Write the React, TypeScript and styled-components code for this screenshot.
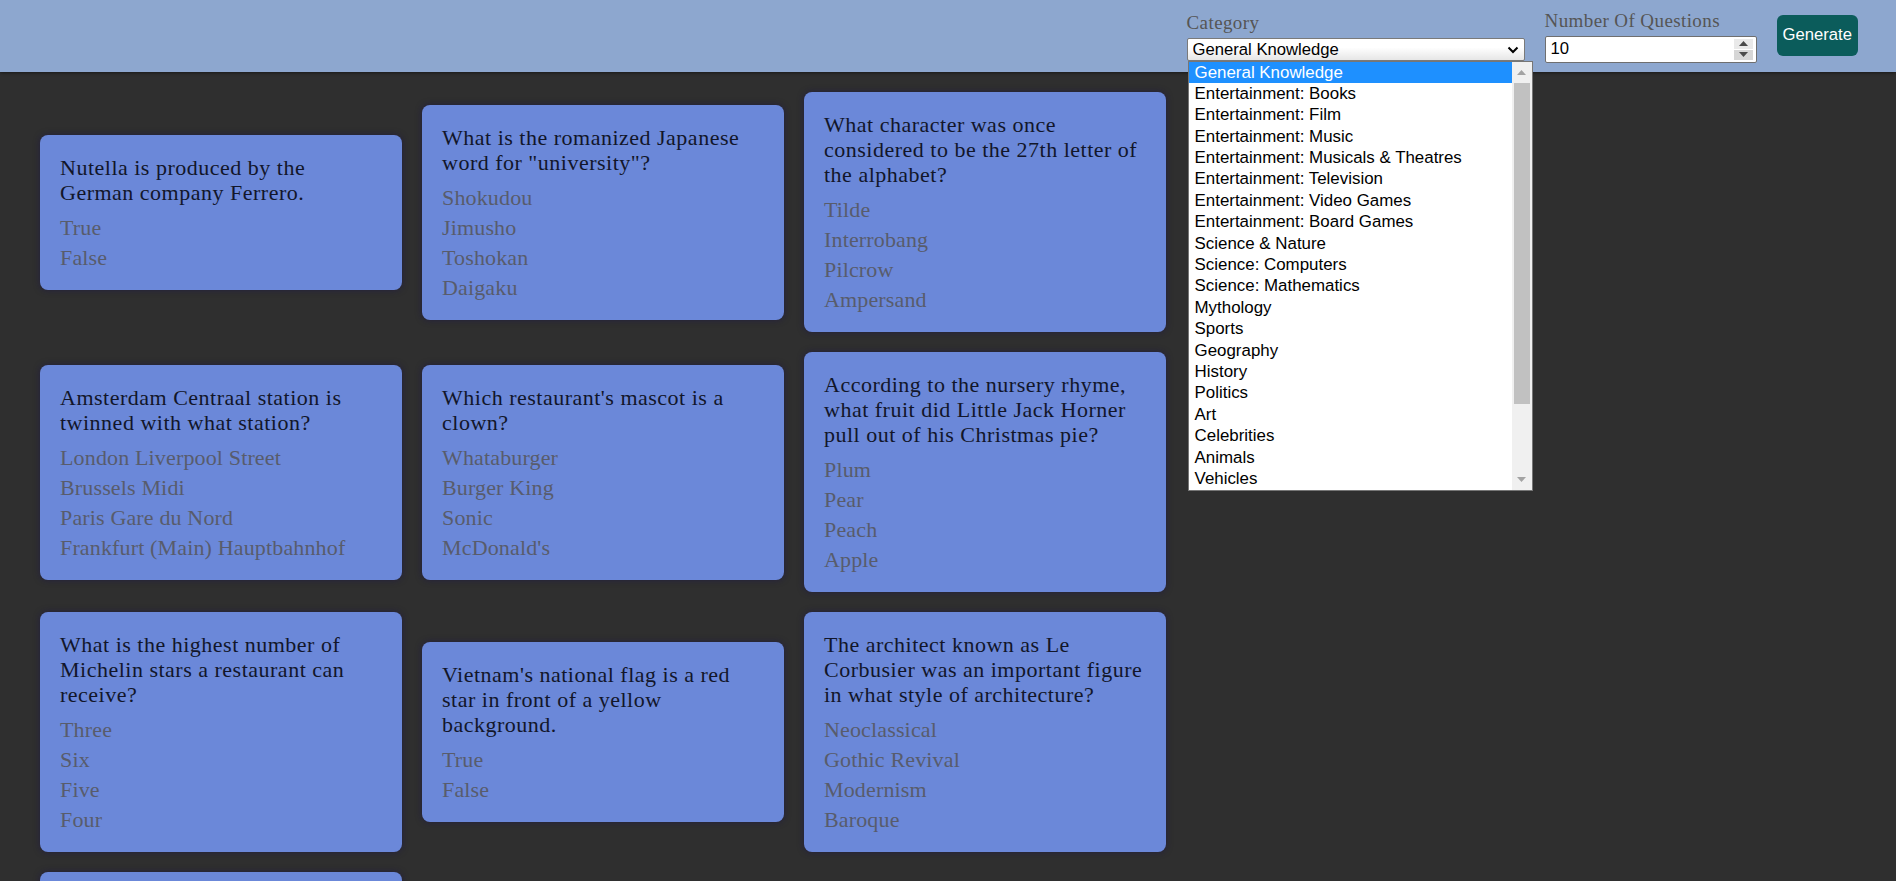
import React from "react";
import styled, { createGlobalStyle, css } from "styled-components";

const GlobalStyle = createGlobalStyle`
  html {
    scrollbar-width: none;
  }
  html::-webkit-scrollbar { display: none; }
  body {
    margin: 0;
    background: #2f2f2f;
    font-family: "Liberation Serif", serif;
  }
  * { box-sizing: border-box; }
`;

type Question = { lines: string[]; answers: string[] };

const questions: Question[] = [
  { lines: ["Nutella is produced by the", "German company Ferrero."], answers: ["True", "False"] },
  {
    lines: ["What is the romanized Japanese", 'word for "university"?'],
    answers: ["Shokudou", "Jimusho", "Toshokan", "Daigaku"],
  },
  {
    lines: ["What character was once", "considered to be the 27th letter of", "the alphabet?"],
    answers: ["Tilde", "Interrobang", "Pilcrow", "Ampersand"],
  },
  {
    lines: ["Amsterdam Centraal station is", "twinned with what station?"],
    answers: ["London Liverpool Street", "Brussels Midi", "Paris Gare du Nord", "Frankfurt (Main) Hauptbahnhof"],
  },
  {
    lines: ["Which restaurant's mascot is a", "clown?"],
    answers: ["Whataburger", "Burger King", "Sonic", "McDonald's"],
  },
  {
    lines: ["According to the nursery rhyme,", "what fruit did Little Jack Horner", "pull out of his Christmas pie?"],
    answers: ["Plum", "Pear", "Peach", "Apple"],
  },
  {
    lines: ["What is the highest number of", "Michelin stars a restaurant can", "receive?"],
    answers: ["Three", "Six", "Five", "Four"],
  },
  {
    lines: ["Vietnam's national flag is a red", "star in front of a yellow", "background."],
    answers: ["True", "False"],
  },
  {
    lines: ["The architect known as Le", "Corbusier was an important figure", "in what style of architecture?"],
    answers: ["Neoclassical", "Gothic Revival", "Modernism", "Baroque"],
  },
  {
    lines: ["What is the official language of", "Brazil?"],
    answers: ["Spanish", "Portuguese", "French", "English"],
  },
];

const categories = [
  "General Knowledge",
  "Entertainment: Books",
  "Entertainment: Film",
  "Entertainment: Music",
  "Entertainment: Musicals & Theatres",
  "Entertainment: Television",
  "Entertainment: Video Games",
  "Entertainment: Board Games",
  "Science & Nature",
  "Science: Computers",
  "Science: Mathematics",
  "Mythology",
  "Sports",
  "Geography",
  "History",
  "Politics",
  "Art",
  "Celebrities",
  "Animals",
  "Vehicles",
];

const Header = styled.header`
  height: 72px;
  background: #8da7cf;
  display: flex;
  justify-content: flex-end;
  align-items: center;
  gap: 20px;
  padding-right: 38px;
  box-shadow: 0 1px 3px rgba(0, 0, 0, 0.45);
  position: relative;
  z-index: 2;
`;

const Field = styled.div`
  display: flex;
  flex-direction: column;
`;

const Label = styled.label`
  font-family: "Liberation Serif", serif;
  font-size: 19px;
  letter-spacing: 0.4px;
  line-height: 22px;
  color: #555;
  margin-bottom: 4px;
`;

const SelectWrap = styled.div`
  position: relative;
  width: 338px;
`;

const NativeSelect = styled.select`
  appearance: none;
  width: 100%;
  height: 23px;
  margin: 0;
  padding: 0 24px 0 5px;
  font-family: "Liberation Sans", Arial, sans-serif;
  font-size: 16.67px;
  color: #000;
  border: 1px solid #7a7a7a;
  border-radius: 2px;
  background: linear-gradient(#ffffff, #ffffff 40%, #e6e6e6);
  outline: none;
`;

const Chevron = styled.svg`
  position: absolute;
  right: 6px;
  top: 8px;
  pointer-events: none;
`;

const ListBox = styled.div`
  position: absolute;
  top: 100%;
  left: 1px;
  width: 345px;
  height: 430px;
  border: 1px solid #767676;
  background: #fff;
  display: flex;
  z-index: 10;
`;

const Options = styled.ul`
  flex: 1;
  margin: 0;
  padding: 0;
  list-style: none;
  overflow: hidden;
`;

const Option = styled.li<{ $active?: boolean }>`
  height: 21.4px;
  line-height: 21.4px;
  padding: 0 6px;
  font-family: "Liberation Sans", Arial, sans-serif;
  font-size: 16.9px;
  color: #000;
  white-space: nowrap;
  ${(p) =>
    p.$active &&
    css`
      background: #1e90ff;
      color: #fff;
    `}
`;

const ScrollBar = styled.div`
  width: 20px;
  background: #f0f0f0;
  display: flex;
  flex-direction: column;
`;

const ScrollArrow = styled.div`
  height: 21px;
  display: flex;
  align-items: center;
  justify-content: center;
`;

const Thumb = styled.div`
  height: 321px;
  margin: 0 2px;
  background: #c1c1c1;
`;

const TrackRest = styled.div`
  flex: 1;
`;

const NumberWrap = styled.div`
  position: relative;
  width: 212px;
`;

const NumberInput = styled.input`
  width: 100%;
  height: 27px;
  margin: 0;
  padding: 0 5px;
  font-family: "Liberation Sans", Arial, sans-serif;
  font-size: 16.67px;
  color: #000;
  border: 1px solid #6f6f6f;
  border-radius: 2px;
  background: #fff;
  outline: none;
  -moz-appearance: textfield;
  &::-webkit-inner-spin-button,
  &::-webkit-outer-spin-button {
    -webkit-appearance: none;
    margin: 0;
  }
`;

const Spinner = styled.div`
  position: absolute;
  right: 4px;
  top: 3px;
  bottom: 3px;
  width: 19px;
  display: flex;
  flex-direction: column;
  gap: 1px;
`;

const SpinHalf = styled.div<{ $down?: boolean }>`
  flex: 1;
  display: flex;
  align-items: center;
  justify-content: center;
  background: ${(p) => (p.$down ? "#d6d6d6" : "#e9e9e9")};
`;

const GenerateButton = styled.button`
  height: 41px;
  padding: 0 6px;
  margin-bottom: 2px;
  border: none;
  border-radius: 6px;
  background: #0b5c5b;
  color: #fff;
  font-family: "Liberation Sans", Arial, sans-serif;
  font-size: 16.67px;
  cursor: pointer;
`;

const Board = styled.main`
  display: flex;
  flex-wrap: wrap;
  align-items: center;
  width: 1206px;
  padding: 10px 30px;
`;

const Card = styled.article`
  width: 362px;
  margin: 10px;
  padding: 20px 20px 19px;
  background: #6b88d9;
  border-radius: 8px;
  box-shadow: 0 0 6px rgba(28, 22, 70, 0.65);
`;

const QuestionText = styled.h2`
  margin: 0 0 10px;
  font-family: "Liberation Serif", serif;
  font-weight: 400;
  font-size: 22px;
  letter-spacing: 0.5px;
  line-height: 25px;
  color: #12162a;
`;

const Line = styled.span`
  display: block;
  white-space: nowrap;
`;

const AnswerList = styled.ul`
  margin: 0;
  padding: 0;
  list-style: none;
  display: flex;
  flex-direction: column;
  gap: 4px;
`;

const Answer = styled.li`
  font-family: "Liberation Serif", serif;
  font-size: 22px;
  letter-spacing: 0.15px;
  line-height: 26px;
  color: #585c6c;
`;

const Triangle = ({ up }: { up?: boolean }) => (
  <svg width="9" height="5" viewBox="0 0 9 5">
    <path d={up ? "M0 5 L4.5 0 L9 5 Z" : "M0 0 L4.5 5 L9 0 Z"} fill="#a3a3a3" />
  </svg>
);

const SpinTriangle = ({ up }: { up?: boolean }) => (
  <svg width="9" height="5" viewBox="0 0 9 5">
    <path d={up ? "M0 5 L4.5 0 L9 5 Z" : "M0 0 L4.5 5 L9 0 Z"} fill="#4a4a4a" />
  </svg>
);

export default function App() {
  return (
    <>
      <GlobalStyle />
      <Header>
        <Field>
          <Label>Category</Label>
          <SelectWrap>
            <NativeSelect defaultValue={categories[0]}>
              {categories.map((c) => (
                <option key={c}>{c}</option>
              ))}
            </NativeSelect>
            <Chevron width="12" height="8" viewBox="0 0 12 8">
              <path d="M1.5 1.5 L6 6 L10.5 1.5" stroke="#000" strokeWidth="2" fill="none" />
            </Chevron>
            <ListBox>
              <Options>
                {categories.map((c, i) => (
                  <Option key={c} $active={i === 0}>
                    {c}
                  </Option>
                ))}
              </Options>
              <ScrollBar>
                <ScrollArrow>
                  <Triangle up />
                </ScrollArrow>
                <Thumb />
                <TrackRest />
                <ScrollArrow>
                  <Triangle />
                </ScrollArrow>
              </ScrollBar>
            </ListBox>
          </SelectWrap>
        </Field>
        <Field>
          <Label>Number Of Questions</Label>
          <NumberWrap>
            <NumberInput type="number" defaultValue={10} />
            <Spinner>
              <SpinHalf>
                <SpinTriangle up />
              </SpinHalf>
              <SpinHalf $down>
                <SpinTriangle />
              </SpinHalf>
            </Spinner>
          </NumberWrap>
        </Field>
        <GenerateButton>Generate</GenerateButton>
      </Header>
      <Board>
        {questions.map((q, i) => (
          <Card key={i}>
            <QuestionText>
              {q.lines.map((l) => (
                <Line key={l}>{l}</Line>
              ))}
            </QuestionText>
            <AnswerList>
              {q.answers.map((a) => (
                <Answer key={a}>{a}</Answer>
              ))}
            </AnswerList>
          </Card>
        ))}
      </Board>
    </>
  );
}
